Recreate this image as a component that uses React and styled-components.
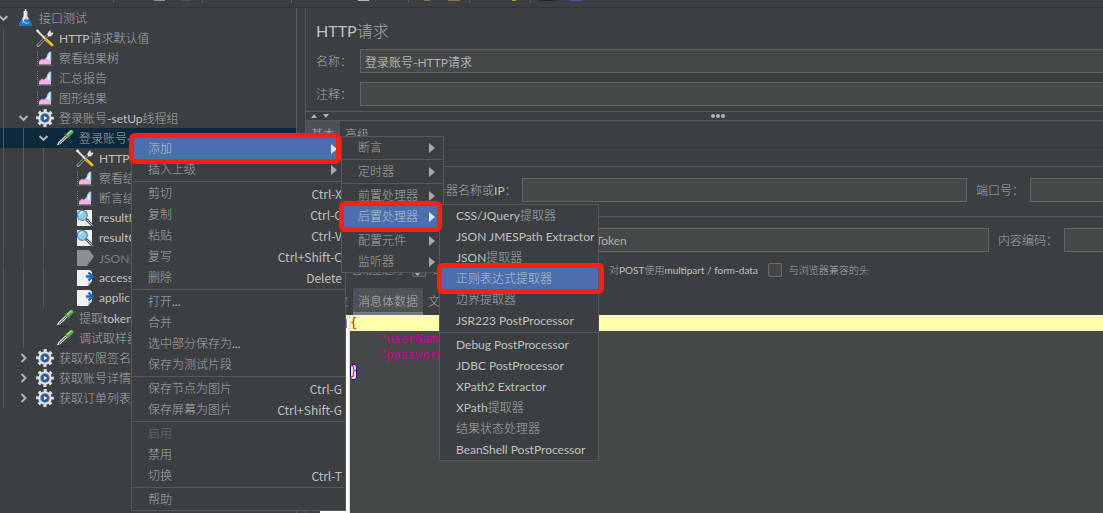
import React from "react";
import styled, { createGlobalStyle, css } from "styled-components";

const GlobalStyle = createGlobalStyle`
  * {
    box-sizing: border-box;
  }
  body {
    margin: 0;
    background: #3c3f41;
    color: #a6a8a9;
    font-family: Lato, "Noto Sans CJK SC", sans-serif;
    font-size: 12px;
    line-height: 20px;
  }
  button, input {
    font: inherit;
    color: inherit;
    margin: 0;
    padding: 0;
    border: 0;
    background: none;
  }
  ul {
    list-style: none;
    margin: 0;
    padding: 0;
  }
`;

const Window = styled.div`
  position: relative;
  min-height: 100vh;
  display: flex;
  flex-direction: column;
  overflow: hidden;
`;

/* ---------- text ---------- */

const Latin = styled.span`
  color: ${(props) => (props.$dim ? "inherit" : "#c0c0c0")};
`;
const Han = styled.span`
  font-family: "Noto Sans CJK SC", sans-serif;
  font-weight: 300;
`;

function Text({ children, dim }) {
  const runs = children.match(/[\u3000-\uffff]+|[^\u3000-\uffff]+/g) || [];
  return runs.map((run, i) =>
    /[\u3000-\uffff]/.test(run) ? (
      <Han key={i}>{run}</Han>
    ) : (
      <Latin key={i} $dim={dim}>
        {run}
      </Latin>
    )
  );
}

/* ---------- toolbar ---------- */

const Toolbar = styled.div`
  height: 8px;
  display: flex;
  align-items: flex-start;
  border-bottom: 1px solid #323536;
`;
const ToolSeparator = styled.span`
  width: 1px;
  height: 3px;
  margin-left: ${(props) => props.$gap}px;
  background: #5a5d5f;
`;
const ToolEdge = styled.span`
  width: ${(props) => props.$width}px;
  height: 1px;
  margin-left: ${(props) => props.$gap}px;
  background: ${(props) => props.$color};
`;

const tools = [
  { gap: 113 },
  { gap: 40, width: 11, color: "#8b9088" },
  { gap: 16, width: 10, color: "#50544b" },
  { gap: 11 },
  { gap: 88 },
  { gap: 66, width: 11, color: "#b5b7b2" },
  { gap: 39 },
  { gap: 15, width: 6, color: "#8a7050" },
  { gap: 18, width: 12, color: "#8a7050" },
  { gap: 9 },
  { gap: 42, width: 4, color: "#b59a20" },
  { gap: 14 },
  { gap: 8, width: 17, color: "#25282a" },
  { gap: 13, width: 14, color: "#3c5a94" },
];

/* ---------- tree ---------- */

const Body = styled.div`
  flex: 1;
  display: flex;
`;
const Tree = styled.ul`
  flex: 0 0 297px;
  overflow: hidden;
  border-right: 1px solid #555758;
`;
const TreeRow = styled.li`
  height: 20px;
  display: flex;
  align-items: center;
  white-space: nowrap;
  background: ${(props) => (props.$selected ? "#0d293e" : "none")};
  opacity: ${(props) => (props.$disabled ? 0.6 : 1)};
`;
const Guide = styled.span`
  width: 20px;
  height: 20px;
  background: linear-gradient(#55585a, #55585a) 3px 0 / 1px 100% no-repeat;
`;
const Toggle = styled.button`
  width: 16px;
  height: 20px;
  display: flex;
  align-items: center;
  svg {
    margin-left: -2px;
    flex: none;
  }
`;
const Leaf = styled.span`
  width: 16px;
`;
const TreeName = styled.button`
  display: flex;
  align-items: center;
  gap: 5px;
  svg {
    flex: none;
  }
`;

const FlaskIcon = () => (
  <svg width="18" height="18" viewBox="0 0 18 18">
    <path d="M7.500 2h4v5l4 8q.5 2-1.500 2H5q-2 0-1.500-2l4-8z" fill="#c3d2e4" />
    <path d="M5.800 10.500h7.400L15.700 15q.3 2-1.700 2H5q-2 0-1.700-2z" fill="#1f6fc4" />
    <path d="M6 14l2-1.500 2 2 3-1" stroke="#6fb8f5" strokeWidth="1.500" fill="none" />
    <path d="M8.800 2v6L7 12" stroke="#fff" strokeWidth="1.200" fill="none" />
    <path d="M9.500 0v2" stroke="#c3d2e4" strokeWidth="1.600" />
  </svg>
);
const ToolsIcon = () => (
  <svg width="18" height="18" viewBox="0 0 18 18">
    <path d="M2 16.500L13 5" stroke="#9a9d9b" strokeWidth="3" strokeLinecap="round" />
    <path d="M2.300 16L12 6" stroke="#34383a" strokeWidth="1.200" strokeLinecap="round" />
    <path d="M12 7.500Q10.500 3.500 14.500 1l.3 2.800 2.700-.3q-.8 4.200-5.500 4z" fill="#dfe1dd" />
    <path d="M1 1.500l8.500 8.500" stroke="#e6e7e3" strokeWidth="1.800" />
    <path d="M.5 1l2 1.500" stroke="#fff" strokeWidth="2" />
    <path d="M10.500 11l5.500 5" stroke="#e8a800" strokeWidth="3" strokeLinecap="round" />
    <path d="M10.800 10.600l5.300 4.800" stroke="#ffd83c" strokeWidth="1.200" strokeLinecap="round" />
  </svg>
);
const GraphIcon = () => (
  <svg width="18" height="18" viewBox="0 0 18 18">
    <path d="M1.500 2v14.500M1.500 16.500h15" stroke="#777b7d" strokeWidth="1" strokeDasharray="1 1" />
    <path d="M3 15.500V12.500l3-2.500 2 1 3-2.500 4 1v6z" fill="#f3b4e3" />
    <path d="M3 12.500l3-2.500 2 1 2-2" stroke="#e57bc6" fill="none" />
    <path d="M15.300 2.500v9.500q-4.500.5-6-2.500 1.200-1 1.800-3Q12 2.500 15.300 2.500z" fill="#a9c6f0" />
    <path d="M13.800 4v7q-2 0-3-1.500 1.500-2 1.700-4z" fill="#e9f2fd" />
  </svg>
);
const GearIcon = () => (
  <svg width="18" height="18" viewBox="0 0 18 18">
    <circle cx="9" cy="9" r="7.400" fill="none" stroke="#dcdedd" strokeWidth="3" strokeDasharray="3 2.811" strokeDashoffset="1.500" />
    <circle cx="9" cy="9" r="6.800" fill="#e3e5e4" />
    <circle cx="9" cy="9" r="4.900" fill="#8299bb" />
    <circle cx="9" cy="9" r="3.900" fill="#24559f" />
    <path d="M7.800 6.800l3.600 2.200-3.600 2.200z" fill="#e8f0fb" />
  </svg>
);
const DropperIcon = () => (
  <svg width="18" height="18" viewBox="0 0 18 18">
    <path d="M3 17.500h9" stroke="#2c2f30" strokeWidth="1" />
    <path d="M.5 16.500l2-3.500L9.500 6.500l2 2L4.500 15z" fill="#d9dddb" />
    <path d="M3 14.500L10 8" stroke="#525a58" strokeWidth="1" />
    <path d="M9.200 5.200l3.800 3.600" stroke="#356b2d" strokeWidth="2" strokeLinecap="round" />
    <path d="M11.500 6.500l4-3.700" stroke="#5aa845" strokeWidth="4" strokeLinecap="round" />
    <path d="M11.500 5.300l3.500-3.300" stroke="#a6dc91" strokeWidth="1.500" strokeLinecap="round" />
  </svg>
);
const SearchPageIcon = () => (
  <svg width="18" height="18" viewBox="0 0 18 18">
    <path d="M1 1h15v16H1z" fill="#eff1f1" />
    <path d="M10.500 10.500l6 6" stroke="#4f5557" strokeWidth="2.600" strokeLinecap="round" />
    <path d="M11 11l5.500 5.500" stroke="#b5babb" strokeWidth="1" />
    <circle cx="6.300" cy="6.300" r="5" fill="#8ccbef" stroke="#4e8bb0" strokeWidth="1.200" />
    <path d="M3.500 6q.5-3 3.500-3" stroke="#def4ff" strokeWidth="1.600" fill="none" />
  </svg>
);
const ArrowPageIcon = () => (
  <svg width="18" height="18" viewBox="0 0 18 18">
    <path d="M1 1h13l2 2v9l-4 5H1z" fill="#f1f2f3" />
    <path d="M11.500 17l1-4 3.500-1z" fill="#b8bcbe" />
    <path d="M10 7.500h5M12.500 3.500l4 4-4 4" stroke="#1c67cf" strokeWidth="2.400" fill="none" />
  </svg>
);
const GreyPageIcon = () => (
  <svg width="18" height="18" viewBox="0 0 18 18">
    <path d="M1 1h12l5 6.500L14 13l-3 4H1z" fill="#c4c6c7" />
    <path d="M11 17l1.500-4H14z" fill="#8a8c8d" />
  </svg>
);

const Chevron = ({ open }) => (
  <svg width="10" height="10" viewBox="0 0 10 10">
    <path
      d={open ? "M1.500 3L5.500 6.800 9.500 3" : "M3.500 1L7.500 5l-4 4"}
      stroke="#afb1b3"
      strokeWidth="2"
      fill="none"
    />
  </svg>
);

const nodes = [
  { level: 0, icon: FlaskIcon, name: "接口测试", open: true },
  { level: 1, icon: ToolsIcon, name: "HTTP请求默认值" },
  { level: 1, icon: GraphIcon, name: "察看结果树" },
  { level: 1, icon: GraphIcon, name: "汇总报告" },
  { level: 1, icon: GraphIcon, name: "图形结果" },
  { level: 1, icon: GearIcon, name: "登录账号-setUp线程组", open: true },
  { level: 2, icon: DropperIcon, name: "登录账号-", open: true, selected: true },
  { level: 3, icon: ToolsIcon, name: "HTTP信" },
  { level: 3, icon: GraphIcon, name: "察看结" },
  { level: 3, icon: GraphIcon, name: "断言结" },
  { level: 3, icon: SearchPageIcon, name: "resultM" },
  { level: 3, icon: SearchPageIcon, name: "resultC" },
  { level: 3, icon: GreyPageIcon, name: "JSON提", disabled: true },
  { level: 3, icon: ArrowPageIcon, name: "access" },
  { level: 3, icon: ArrowPageIcon, name: "applic" },
  { level: 2, icon: DropperIcon, name: "提取token" },
  { level: 2, icon: DropperIcon, name: "调试取样器" },
  { level: 1, icon: GearIcon, name: "获取权限签名", open: false },
  { level: 1, icon: GearIcon, name: "获取账号详情", open: false },
  { level: 1, icon: GearIcon, name: "获取订单列表", open: false },
];

function TestTree() {
  return (
    <Tree>
      {nodes.map((node, i) => {
        const Icon = node.icon;
        return (
          <TreeRow key={i} $selected={node.selected} $disabled={node.disabled}>
            {Array.from({ length: node.level }, (_, n) => (
              <Guide key={n} />
            ))}
            {node.open === undefined ? (
              <Leaf />
            ) : (
              <Toggle aria-label={node.name} aria-expanded={node.open}>
                <Chevron open={node.open} />
              </Toggle>
            )}
            <TreeName>
              <Icon />
              <span>
                <Text dim={node.disabled}>{node.name}</Text>
              </span>
            </TreeName>
          </TreeRow>
        );
      })}
    </Tree>
  );
}

/* ---------- request panel ---------- */

const Panel = styled.main`
  flex: 1;
  min-width: 0;
  margin-left: 8px;
  border-left: 1px solid #555758;
  display: flex;
  flex-direction: column;
`;
const Title = styled.h1`
  height: 41px;
  margin: 0;
  padding: 10px 10px 0;
  font-size: 16px;
  font-weight: 400;
  line-height: 24px;
`;
const Field = styled.div`
  display: flex;
  align-items: center;
  height: 24px;
  margin-bottom: ${(props) => props.$after || 0}px;
  padding-left: ${(props) => props.$indent || 10}px;
`;
const FieldLabel = styled.label`
  flex: none;
  width: ${(props) => (props.$width ? props.$width + "px" : "auto")};
  margin-right: ${(props) => (props.$width ? 0 : 5)}px;
`;
const TextBox = styled.input`
  height: 24px;
  min-width: 0;
  flex: ${(props) => (props.$width ? `0 0 ${props.$width}px` : 1)};
  padding: 0 4px;
  color: #adafb0;
  background: #45494a;
  border: 1px solid #646464;
  ${(props) =>
    props.$edge
      ? css`
          border-right: 0;
        `
      : css`
          margin-right: 9px;
        `}
`;
const Splitter = styled.div`
  height: 10px;
  display: grid;
  grid-template-columns: 1fr auto 1fr;
  align-items: center;
  border: solid #555758;
  border-width: 1px 0;
`;
const SplitButtons = styled.div`
  display: flex;
  gap: 6px;
  padding-left: 5px;
  button {
    display: flex;
  }
`;
const Dots = styled.div`
  display: flex;
  gap: 1px;
  margin-left: 26px;
  i {
    width: 4px;
    height: 4px;
    border-radius: 2px;
    background: #afb1b3;
  }
`;
const Tabs = styled.div`
  height: 27px;
  display: flex;
  padding-left: ${(props) => props.$indent || 0}px;
  border-bottom: ${(props) => (props.$plain ? 0 : "1px solid #323536")};
`;
const Tab = styled.button`
  padding: 0 5px;
  ${(props) =>
    props.$active &&
    css`
      color: #b4b6b7;
      background: #4e5254;
      border-bottom: 3px solid #747a80;
      padding-top: 3px;
    `}
`;
const Section = styled.section`
  margin-top: ${(props) => (props.$spaced ? 18 : 0)}px;
  padding: 11px 0 14px;
  border-top: 1px solid #555758;
`;
const Options = styled.div`
  display: flex;
  align-items: center;
  gap: 10px;
  height: 14px;
  margin: 11px 0 -3px;
  padding-left: 25px;
  font-size: 10px;
  white-space: nowrap;
`;
const Option = styled.label`
  display: flex;
  align-items: center;
  gap: 7px;
`;
const CheckBox = styled.input`
  appearance: none;
  width: 14px;
  height: 14px;
  background: #43474a;
  border: 1px solid #6b6b6b;
  border-radius: 2px;
  display: grid;
  place-items: center;
  &:checked::after {
    content: "";
    width: 4px;
    height: 8px;
    border: solid #a7a7a7;
    border-width: 0 2px 2px 0;
    rotate: 45deg;
  }
`;

const options = [
  { label: "自动重定向" },
  { label: "跟随重定向", checked: true },
  { label: "使用KeepAlive", checked: true },
  { label: "对POST使用multipart / form-data" },
  { label: "与浏览器兼容的头" },
];

const Editor = styled.div`
  flex: 1;
  display: flex;
  margin-left: 14px;
  font-family: "DejaVu Sans Mono", monospace;
  line-height: 16px;
`;
const Gutter = styled.div`
  flex: 0 0 30px;
  display: flex;
  justify-content: flex-end;
  padding: 4px 2px;
  background: #ffffff;
  border-right: 1px solid #dddddd;
`;
const Fold = styled.button`
  width: 9px;
  height: 9px;
  border: 1px solid #808080;
`;
const Code = styled.div`
  flex: 1;
  background: #454849;
  color: #cc0099;
`;
const Line = styled.div`
  height: 16px;
  white-space: pre;
  background: ${(props) => (props.$current ? "#ffffaa" : "none")};
`;
const Brace = styled.span`
  color: #ff0000;
  ${(props) =>
    props.$match &&
    css`
      display: inline-block;
      height: 16px;
      line-height: 14px;
      background: #eaeaff;
      border-radius: 3px;
      box-shadow: inset 0 0 0 1px #000080;
    `}
`;

function RequestPanel() {
  return (
    <Panel>
      <Title>
        <Text>HTTP请求</Text>
      </Title>
      <Field $after={9}>
        <FieldLabel $width={44} htmlFor="name">
          <Text>名称：</Text>
        </FieldLabel>
        <TextBox id="name" $edge defaultValue="登录账号-HTTP请求" />
      </Field>
      <Field $after={5}>
        <FieldLabel $width={44} htmlFor="comment">
          <Text>注释：</Text>
        </FieldLabel>
        <TextBox id="comment" $edge />
      </Field>
      <Splitter>
        <SplitButtons>
          <button aria-label="collapse">
            <svg width="6" height="4">
              <path d="M0 4l3-4 3 4z" fill="#afb1b3" />
            </svg>
          </button>
          <button aria-label="expand">
            <svg width="6" height="4">
              <path d="M0 0l3 4 3-4z" fill="#afb1b3" />
            </svg>
          </button>
        </SplitButtons>
        <Dots>
          <i />
          <i />
          <i />
        </Dots>
      </Splitter>
      <Tabs>
        <Tab $active>
          <Text>基本</Text>
        </Tab>
        <Tab>
          <Text>高级</Text>
        </Tab>
      </Tabs>
      <Section $spaced>
        <Field $indent={116}>
          <FieldLabel htmlFor="server">
            <Text>服务器名称或IP：</Text>
          </FieldLabel>
          <TextBox id="server" />
          <FieldLabel $width={54} htmlFor="port">
            <Text>端口号：</Text>
          </FieldLabel>
          <TextBox id="port" $edge $width={73} />
        </Field>
      </Section>
      <Section>
        <Field $indent={223}>
          <FieldLabel htmlFor="path">
            <Text>路径：</Text>
          </FieldLabel>
          <TextBox id="path" defaultValue="/getToken" />
          <FieldLabel $width={66} htmlFor="encoding">
            <Text>内容编码：</Text>
          </FieldLabel>
          <TextBox id="encoding" $edge $width={39} />
        </Field>
        <Options>
          {options.map((option) => (
            <Option key={option.label}>
              <CheckBox type="checkbox" defaultChecked={option.checked} />
              <span>
                <Text>{option.label}</Text>
              </span>
            </Option>
          ))}
        </Options>
      </Section>
      <Tabs $indent={13} $plain>
        <Tab>
          <Text>参数</Text>
        </Tab>
        <Tab $active>
          <Text>消息体数据</Text>
        </Tab>
        <Tab>
          <Text>文件上传</Text>
        </Tab>
      </Tabs>
      <Editor>
        <Gutter>
          <Fold aria-label="fold" />
        </Gutter>
        <Code>
          <Line $current>
            <Brace>{"{"}</Brace>
          </Line>
          <Line>{'    "userName"'}</Line>
          <Line>{'    "password"'}</Line>
          <Line>
            <Brace $match>{"}"}</Brace>
          </Line>
        </Code>
      </Editor>
    </Panel>
  );
}

/* ---------- context menus ---------- */

const Menu = styled.ul`
  position: absolute;
  z-index: 1;
  left: ${(props) => props.$left}px;
  top: ${(props) => props.$top}px;
  min-width: ${(props) => props.$width}px;
  background: #3c3f41;
  border: 1px solid #555758;
`;
const MenuItem = styled.li`
  position: ${(props) => (props.$active ? "relative" : "static")};
  background: ${(props) => (props.$active ? "#4b6eaf" : "none")};
  ${(props) =>
    props.$ring &&
    css`
      &::after {
        content: "";
        position: absolute;
        z-index: 5;
        inset: -5px ${props.$ring}px -5px -3px;
        border: 5px solid #ff2012;
        border-radius: 6px;
        pointer-events: none;
      }
    `}
`;
const MenuButton = styled.button`
  width: 100%;
  height: 21px;
  display: flex;
  align-items: center;
  justify-content: space-between;
  padding: 0 ${(props) => (props.$sub ? 8 : 3)}px 0 16px;
  white-space: nowrap;
  color: ${(props) => (props.$active ? "#b9c0cc" : "inherit")};
  &:disabled {
    color: #6b6d6e;
  }
`;
const Shortcut = styled(Latin)`
  font-family: "Noto Sans CJK SC", sans-serif;
`;
const Rule = styled.li`
  height: 3px;
  padding-top: 1px;
  &::before {
    content: "";
    display: block;
    height: 1px;
    background: #555758;
  }
`;

const SubArrow = ({ active }) => (
  <svg width="6" height="10" viewBox="0 0 6 10">
    <path d="M0 0l6 5-6 5z" fill={active ? "#dfe3ea" : "#a7a9ab"} />
  </svg>
);

const postProcessors = [
  { name: "CSS/JQuery提取器" },
  { name: "JSON JMESPath Extractor" },
  { name: "JSON提取器" },
  { name: "正则表达式提取器", active: true, ring: -6 },
  { name: "边界提取器" },
  { name: "JSR223 PostProcessor" },
  null,
  { name: "Debug PostProcessor" },
  { name: "JDBC PostProcessor" },
  { name: "XPath2 Extractor" },
  { name: "XPath提取器" },
  { name: "结果状态处理器" },
  { name: "BeanShell PostProcessor" },
];

const addItems = [
  { name: "断言", arrow: true },
  null,
  { name: "定时器", arrow: true },
  null,
  { name: "前置处理器", arrow: true },
  {
    name: "后置处理器",
    arrow: true,
    active: true,
    ring: 1,
    sub: { items: postProcessors, left: 97, width: 160 },
  },
  null,
  { name: "配置元件", arrow: true },
  { name: "监听器", arrow: true },
];

const contextItems = [
  {
    name: "添加",
    arrow: true,
    active: true,
    ring: 4,
    sub: { items: addItems, left: 209, width: 103 },
  },
  { name: "插入上级", arrow: true },
  null,
  { name: "剪切", keys: "Ctrl-X" },
  { name: "复制", keys: "Ctrl-C" },
  { name: "粘贴", keys: "Ctrl-V" },
  { name: "复写", keys: "Ctrl+Shift-C" },
  { name: "删除", keys: "Delete" },
  null,
  { name: "打开..." },
  { name: "合并" },
  { name: "选中部分保存为..." },
  { name: "保存为测试片段" },
  null,
  { name: "保存节点为图片", keys: "Ctrl-G" },
  { name: "保存屏幕为图片", keys: "Ctrl+Shift-G" },
  null,
  { name: "启用", disabled: true },
  { name: "禁用" },
  { name: "切换", keys: "Ctrl-T" },
  null,
  { name: "帮助" },
];

function PopupMenu({ items, left, top, width }) {
  return (
    <Menu $left={left} $top={top} $width={width}>
      {items.map((item, i) =>
        item ? (
          <MenuItem key={i} $active={item.active} $ring={item.ring}>
            <MenuButton $sub={item.arrow} $active={item.active} disabled={item.disabled}>
              <span>
                <Text>{item.name}</Text>
              </span>
              {item.keys && <Shortcut>{item.keys}</Shortcut>}
              {item.arrow && <SubArrow active={item.active} />}
            </MenuButton>
            {item.sub && <PopupMenu {...item.sub} top={-2} />}
          </MenuItem>
        ) : (
          <Rule key={i} />
        )
      )}
    </Menu>
  );
}

function App() {
  return (
    <Window>
      <GlobalStyle />
      <Toolbar>
        {tools.map((tool, i) =>
          tool.color ? (
            <ToolEdge key={i} $gap={tool.gap} $width={tool.width} $color={tool.color} />
          ) : (
            <ToolSeparator key={i} $gap={tool.gap} />
          )
        )}
      </Toolbar>
      <Body>
        <TestTree />
        <RequestPanel />
      </Body>
      <PopupMenu items={contextItems} left={131} top={137} width={215} />
    </Window>
  );
}

export default App;
